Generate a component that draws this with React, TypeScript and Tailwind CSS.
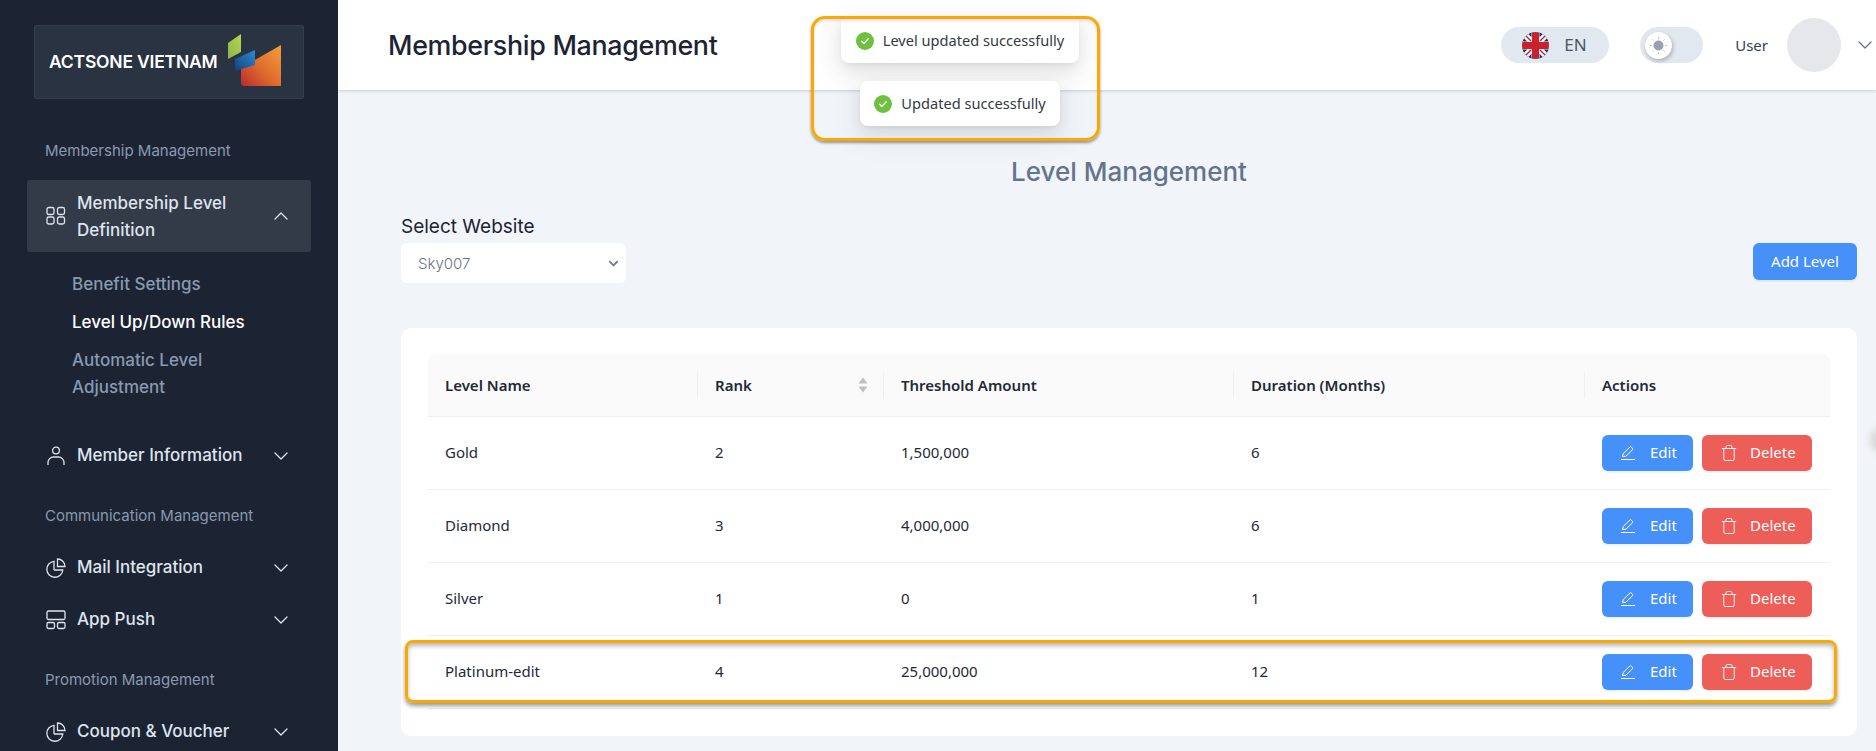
import { ChevronDown, ChevronUp, Trash } from "lucide-react";

const sans = "font-['Inter',sans-serif]";
const tableFont = "font-['Noto_Sans',sans-serif]";

const rows = [
  { name: "Gold", rank: "2", amount: "1,500,000", months: "6" },
  { name: "Diamond", rank: "3", amount: "4,000,000", months: "6" },
  { name: "Silver", rank: "1", amount: "0", months: "1" },
  { name: "Platinum-edit", rank: "4", amount: "25,000,000", months: "12" },
];

function GridIcon() {
  return (
    <svg width="20" height="20" viewBox="0 0 20 20" fill="none" stroke="currentColor" strokeWidth="1.3">
      <rect x="1" y="1.5" width="7" height="7" rx="1.8" />
      <rect x="11.5" y="1.5" width="7" height="7" rx="1.8" />
      <rect x="1" y="11" width="7" height="7" rx="1.8" />
      <rect x="11.5" y="11" width="7" height="7" rx="1.8" />
    </svg>
  );
}

function UserIcon() {
  return (
    <svg width="20" height="20" viewBox="0 0 20 20" fill="none" stroke="currentColor" strokeWidth="1.3">
      <circle cx="10" cy="4.5" r="3.4" />
      <path d="M2 19v-2.5C2 13.5 4.5 11 7.5 11h5c3 0 5.500 2.500 5.500 5.500V19" />
    </svg>
  );
}

function PieIcon() {
  return (
    <svg width="20" height="20" viewBox="0 0 20 20" fill="none" stroke="currentColor" strokeWidth="1.3">
      <path d="M8 3.300A8 8 0 1 0 16.800 12H8.500a.5.5 0 0 1-.5-.5V3.300Z" />
      <path d="M11.500 1v7.500H19C19 4.300 15.700 1 11.500 1Z" />
    </svg>
  );
}

function PanelsIcon() {
  return (
    <svg width="20" height="20" viewBox="0 0 20 20" fill="none" stroke="currentColor" strokeWidth="1.3">
      <rect x="1" y="1" width="18" height="8.500" rx="1.500" />
      <rect x="1" y="12.500" width="7.500" height="6" rx="1.500" />
      <rect x="11.500" y="12.500" width="7.500" height="6" rx="1.500" />
    </svg>
  );
}

function Logo() {
  return (
    <svg width="54" height="53" viewBox="0 0 54 53" className="mb-[3px]">
      <defs>
        <linearGradient id="logoOrange" x1="1" y1="0" x2="0" y2="1">
          <stop offset="0" stopColor="#f2a03a" />
          <stop offset="0.55" stopColor="#df6a2c" />
          <stop offset="1" stopColor="#b82a2c" />
        </linearGradient>
        <linearGradient id="logoGreen" x1="1" y1="0" x2="0" y2="1">
          <stop offset="0" stopColor="#b7d553" />
          <stop offset="1" stopColor="#8fb548" />
        </linearGradient>
        <linearGradient id="logoBlue" x1="1" y1="0" x2="0" y2="1">
          <stop offset="0" stopColor="#2f8ad0" />
          <stop offset="1" stopColor="#12427f" />
        </linearGradient>
      </defs>
      <path d="M13 34 L53 11 V52 H16 Q13 52 13 49 Z" fill="url(#logoOrange)" />
      <path d="M0 9 L13 0 V18 L0 25 Z" fill="url(#logoGreen)" />
      <path d="M7 25 L27 16 V31 L7 37 Z" fill="url(#logoBlue)" />
    </svg>
  );
}

function UkFlag() {
  return (
    <svg width="27" height="27" viewBox="0 0 27 27" className="rounded-full">
      <rect width="27" height="27" fill="#1a2f6d" />
      <path d="M0 0 27 27M27 0 0 27" stroke="#fff" strokeWidth="6" />
      <path d="M0 0 27 27M27 0 0 27" stroke="#c8222f" strokeWidth="1.400" />
      <rect x="9.500" width="8" height="27" fill="#fff" />
      <rect y="9.500" width="27" height="8" fill="#fff" />
      <rect x="10" width="7" height="27" fill="#c8222f" />
      <rect y="10" width="27" height="7" fill="#c8222f" />
    </svg>
  );
}

function SuccessIcon() {
  return (
    <svg width="18" height="18" viewBox="0 0 18 18">
      <circle cx="9" cy="9" r="9" fill="#6fc03f" />
      <path d="M5.700 9.200 8 11.400l4.200-4.600" fill="none" stroke="#fff" strokeWidth="1.400" strokeLinecap="round" strokeLinejoin="round" />
    </svg>
  );
}

function EditIcon() {
  return (
    <svg width="16" height="16" viewBox="0 0 16 16" fill="none" stroke="currentColor" strokeWidth="1">
      <path d="M2.500 11.500 3.300 8.500 9.800 2a1 1 0 0 1 1.400 0l1.300 1.300a1 1 0 0 1 0 1.400L6 11.200l-3.500.3Z" />
      <path d="M1 14.500h14" />
    </svg>
  );
}

function MenuItem({ icon, label }: { icon: React.ReactNode; label: string }) {
  return (
    <div className="flex h-[44px] items-center pl-[19px] pr-[18px] font-medium text-[#dee4ee]">
      <span className="w-[31px] shrink-0">{icon}</span>
      <span className="flex-1 text-[17px]">{label}</span>
      <ChevronDown size={24} strokeWidth={1.300} />
    </div>
  );
}

function SectionLabel({ children, className }: { children: string; className: string }) {
  return <p className={`pl-[45px] text-[15px] leading-[20px] text-[#8a99af] ${className}`}>{children}</p>;
}

function Sidebar() {
  return (
    <aside className={`${sans} h-full w-[338px] shrink-0 overflow-hidden bg-[#1c2434] pt-[25px]`}>
      <div className="ml-[34px] flex h-[74px] w-[270px] items-center justify-between rounded-[2px] border border-[#333d4d] bg-[#2a3342] pl-[14px] pr-[21px]">
        <span className="text-[17.500px] font-semibold tracking-[-0.2px] text-white">ACTSONE VIETNAM</span>
        <Logo />
      </div>
      <SectionLabel className="mt-[42px]">Membership Management</SectionLabel>
      <div className="mx-[27px] mt-[19px] flex h-[72px] items-center rounded-[2px] bg-[#333a48] pl-[19px] pr-[18px] font-medium text-[#dee4ee]">
        <span className="w-[31px] shrink-0"><GridIcon /></span>
        <span className="flex-1 pt-[2px] text-[17px] leading-[27px]">Membership Level<br />Definition</span>
        <ChevronUp size={24} strokeWidth={1.300} />
      </div>
      <ul className="mt-[19px] pl-[72px] text-[17px] font-medium leading-[27px] text-[#8a99af]">
        <li>Benefit Settings</li>
        <li className="mt-[11px] text-white">Level Up/Down Rules</li>
        <li className="mt-[11px]">Automatic Level<br />Adjustment</li>
      </ul>
      <div className="mx-[27px] mt-[33px]"><MenuItem icon={<UserIcon />} label="Member Information" /></div>
      <SectionLabel className="mt-[28px]">Communication Management</SectionLabel>
      <div className="mx-[27px] mt-[20px]"><MenuItem icon={<PieIcon />} label="Mail Integration" /></div>
      <div className="mx-[27px] mt-[8px]"><MenuItem icon={<PanelsIcon />} label="App Push" /></div>
      <SectionLabel className="mt-[28px]">Promotion Management</SectionLabel>
      <div className="mx-[27px] mt-[20px]"><MenuItem icon={<PieIcon />} label="Coupon & Voucher" /></div>
    </aside>
  );
}

function Header() {
  return (
    <header className={`${sans} flex h-[90px] shrink-0 items-center bg-white pl-[50px] shadow-[0_1px_3px_rgba(30,41,59,0.2)]`}>
      <h1 className="text-[26.800px] font-medium tracking-[-0.3px] text-[#1c2434]">Membership Management</h1>
      <div className="ml-auto flex h-[36px] w-[108px] items-center rounded-full bg-[#e2e8f0] pl-[21px]">
        <UkFlag />
        <span className={`${tableFont} ml-[15px] text-[17px] text-[#4b5563]`}>EN</span>
      </div>
      <div className="ml-[31px] flex h-[36px] w-[63px] items-center rounded-full bg-[#e2e8f0] pl-[5px]">
        <span className="flex h-[27px] w-[27px] items-center justify-center rounded-full bg-white shadow-[1px_2px_4px_rgba(0,0,0,0.25)]">
          <svg width="17" height="17" viewBox="0 0 17 17" fill="#98a1ae">
            <circle cx="8.500" cy="8.500" r="5" />
            <path d="M8.500 0v1.500M8.500 15.500V17M0 8.500h1.500M15.500 8.500H17M2.500 2.500l1 1M13.500 13.500l1 1M14.500 2.500l-1 1M3.500 13.500l-1 1" stroke="#98a1ae" strokeWidth="0.8" />
          </svg>
        </span>
      </div>
      <span className={`${tableFont} ml-[32px] text-[15px] text-[#374151]`}>User</span>
      <span className="ml-[19px] h-[54px] w-[54px] rounded-full bg-[#e5e7eb]" />
      <ChevronDown size={24} strokeWidth={1.300} className="ml-[12px] mr-[-1px] text-[#64748b]" />
    </header>
  );
}

function LevelTable() {
  return (
    <table className={`${tableFont} w-[1402px] table-fixed border-collapse text-left text-[15px] text-[#1f2937]`}>
      <colgroup>
        <col className="w-[269px]" />
        <col className="w-[186px]" />
        <col className="w-[350px]" />
        <col className="w-[351px]" />
        <col className="w-[246px]" />
      </colgroup>
      <thead>
        <tr className="h-[62px] border-b border-[#eeeeee] bg-[#fafafa]">
          <th className="rounded-tl-[8px] pl-[17px] font-semibold">Level Name</th>
          <th className="relative px-[18px] font-semibold">
            <span className="absolute left-0 top-1/2 h-[27px] w-px -translate-y-1/2 bg-[#f0f0f0]" />
            <span className="flex items-center justify-between">
              Rank
              <svg width="10" height="16" viewBox="0 0 10 16" fill="#bfbfbf" className="mr-[-3px]">
                <path d="M5 0.500 9.500 6.500H0.500ZM5 15.500 0.500 9.500H9.500Z" />
              </svg>
            </span>
          </th>
          <th className="relative px-[18px] font-semibold">
            <span className="absolute left-0 top-1/2 h-[27px] w-px -translate-y-1/2 bg-[#f0f0f0]" />
            Threshold Amount
          </th>
          <th className="relative px-[18px] font-semibold">
            <span className="absolute left-0 top-1/2 h-[27px] w-px -translate-y-1/2 bg-[#f0f0f0]" />
            Duration (Months)
          </th>
          <th className="relative rounded-tr-[8px] px-[18px] font-semibold">
            <span className="absolute left-0 top-1/2 h-[27px] w-px -translate-y-1/2 bg-[#f0f0f0]" />
            Actions
          </th>
        </tr>
      </thead>
      <tbody>
        {rows.map((row) => (
          <tr key={row.name} className="h-[73px] border-b border-[#f0f0f0]">
            <td className="pl-[17px]">{row.name}</td>
            <td className="px-[18px]">{row.rank}</td>
            <td className="px-[18px]">{row.amount}</td>
            <td className="px-[18px]">{row.months}</td>
            <td className="px-[18px]">
              <div className="flex gap-[9px] text-white">
                <button className="flex h-[36px] w-[91px] items-center rounded-[6px] bg-[#4690fa] pl-[18px] text-[15px] shadow-[0_2px_0_rgba(5,145,255,0.08)]">
                  <EditIcon />
                  <span className="ml-[14px]">Edit</span>
                </button>
                <button className="flex h-[36px] w-[110px] items-center rounded-[6px] bg-[#ee5e58] pl-[18px] text-[15px] shadow-[0_2px_0_rgba(255,38,5,0.06)]">
                  <Trash size={18} strokeWidth={1.200} />
                  <span className="ml-[12px]">Delete</span>
                </button>
              </div>
            </td>
          </tr>
        ))}
      </tbody>
    </table>
  );
}

function Toast({ text, className }: { text: string; className: string }) {
  return (
    <div className={`absolute flex h-[45px] items-center justify-center gap-[9px] rounded-[8px] bg-white text-[14.600px] text-[#333a42] shadow-[0_6px_16px_rgba(0,0,0,0.08),0_3px_6px_-4px_rgba(0,0,0,0.12),0_9px_28px_8px_rgba(0,0,0,0.05)] ${tableFont} ${className}`}>
      <SuccessIcon />
      {text}
    </div>
  );
}

export default function App() {
  return (
    <div className="relative flex h-[751px] w-[1876px] overflow-hidden bg-[#f1f5f9]">
      <Sidebar />
      <div className="flex min-w-0 flex-1 flex-col">
        <Header />
        <main className="pl-[63px] pr-[19px]">
          <h2 className={`${sans} mt-[64px] text-center text-[26px] font-medium leading-[36px] text-[#64748b]`}>Level Management</h2>
          <div className="mt-[23px] flex items-end justify-between">
            <div>
              <label className={`${sans} block text-[19px] font-normal leading-[27px] text-[#1c2434]`}>Select Website</label>
              <div className="mt-[3px] flex h-[40px] w-[225px] items-center justify-between rounded-[6px] bg-white pl-[17px] pr-[5px]">
                <span className={`${sans} pt-[2px] text-[15px] font-light text-[#64748b]`}>Sky007</span>
                <ChevronDown size={15} strokeWidth={2.5} className="text-[#64748b]" />
              </div>
            </div>
            <button className={`${tableFont} mb-[3px] h-[37px] w-[104px] rounded-[6px] bg-[#4690fa] text-[15px] text-white shadow-[0_2px_0_rgba(5,145,255,0.08)]`}>Add Level</button>
          </div>
          <section className="mt-[45px] h-[408px] rounded-[10px] bg-white px-[27px] pt-[26px]">
            <LevelTable />
          </section>
        </main>
      </div>

      {/* overlays: toasts and the annotation frames drawn over the shot */}
      <Toast text="Level updated successfully" className="left-[841px] top-[18px] w-[238px] rounded-t-none" />
      <Toast text="Updated successfully" className="left-[860px] top-[81px] w-[200px]" />
      <div className="absolute left-[811px] top-[16px] h-[125px] w-[289px] rounded-[14px] border-[3px] border-[#f9a901] shadow-[0_2px_3px_rgba(0,0,0,0.4),inset_0_2px_3px_rgba(0,0,0,0.12)]" />
      <div className="absolute left-[405px] top-[640px] h-[63px] w-[1432px] rounded-[8px] border-[3px] border-[#f9a901] shadow-[0_3px_4px_rgba(0,0,0,0.4),inset_0_3px_4px_rgba(0,0,0,0.28)]" />
      <div className="absolute right-[-14px] top-[428px] h-[24px] w-[20px] rounded-full bg-[#d9d9d9] blur-[3px]" />
    </div>
  );
}
